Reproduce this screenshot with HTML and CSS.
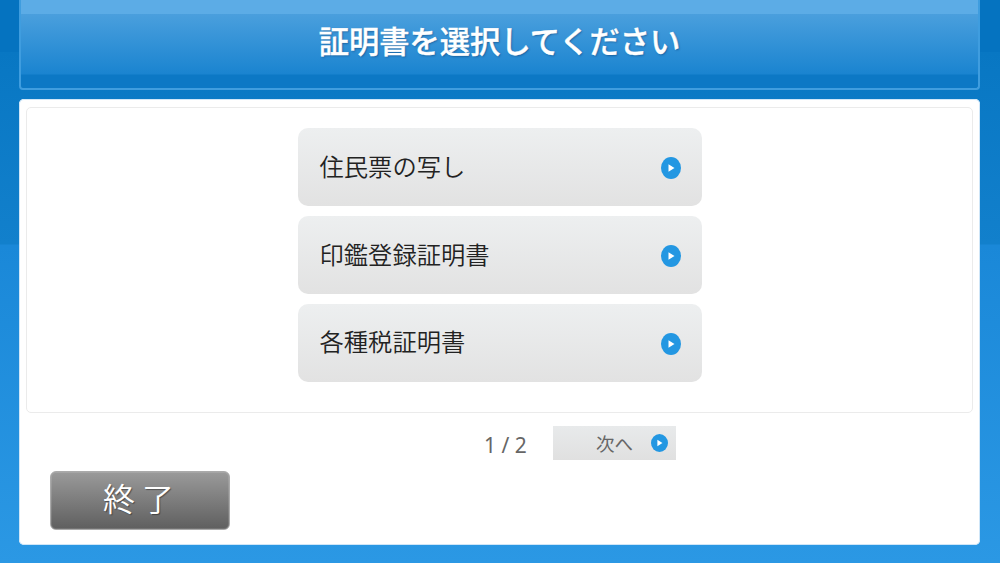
FILE: index.html
```html
<!DOCTYPE html>
<html lang="ja">
<head>
<meta charset="utf-8">
<title>証明書を選択してください</title>
<link rel="stylesheet" href="styles.css">
</head>
<body>
<div class="screen">
  <header class="header">
    <div class="header-shine"></div>
    <h1 class="title">証明書を選択してください</h1>
  </header>
  <main class="panel">
    <section class="list">
      <button class="item"><span class="item-text">住民票の写し</span><svg class="arrow" viewBox="0 0 20 20" preserveAspectRatio="none"><circle cx="10" cy="10" r="10" fill="#2397e2"/><path d="M7.5 6.5 13.5 10 7.5 13.5Z" fill="#fff"/></svg></button>
      <button class="item"><span class="item-text">印鑑登録証明書</span><svg class="arrow" viewBox="0 0 20 20" preserveAspectRatio="none"><circle cx="10" cy="10" r="10" fill="#2397e2"/><path d="M7.5 6.5 13.5 10 7.5 13.5Z" fill="#fff"/></svg></button>
      <button class="item"><span class="item-text">各種税証明書</span><svg class="arrow" viewBox="0 0 20 20" preserveAspectRatio="none"><circle cx="10" cy="10" r="10" fill="#2397e2"/><path d="M7.5 6.5 13.5 10 7.5 13.5Z" fill="#fff"/></svg></button>
    </section>
    <div class="pager">
      <span class="page-num">1 / 2</span>
      <button class="next"><span>次へ</span><svg class="arrow-small" viewBox="0 0 20 20" preserveAspectRatio="none"><circle cx="10" cy="10" r="10" fill="#2397e2"/><path d="M7.5 6.5 13.5 10 7.5 13.5Z" fill="#fff"/></svg></button>
    </div>
    <button class="exit">終 了</button>
  </main>
</div>
</body>
</html>
```
FILE: styles.css
```css
html, body {
  margin: 0;
  height: 100%;
}
body {
  width: 1000px;
  height: 563px;
  overflow: hidden;
  font-family: "Noto Sans CJK JP", "Noto Sans", sans-serif;
  background: linear-gradient(180deg, #0573c0 0, #0573c0 52px, #0877c3 52px, #1280cc 244px, #1a88d8 245px, #2b98e4 563px);
}
.screen {
  display: flex;
  flex-direction: column;
  height: 563px;
  padding: 0 20px 18px 19px;
  box-sizing: border-box;
}
.header {
  position: relative;
  height: 90px;
  box-sizing: border-box;
  border: 2px solid #3f9ddf;
  border-top: 0;
  border-radius: 0 0 4px 4px;
  background: linear-gradient(180deg, #4a9fdd 14px, #1a84d0 74px, #0c78c5 75px, #0c78c5 100%);
  display: flex;
  align-items: center;
  justify-content: center;
}
.header-shine {
  position: absolute;
  left: 0;
  right: 0;
  top: 0;
  height: 14px;
  background: #5cace6;
}
.title {
  position: relative;
  margin: 0 0 8px;
  font-size: 30.3px;
  font-weight: 500;
  line-height: 40px;
  color: #fff;
  -webkit-text-stroke: .4px #fff;
  text-shadow: 1px 1px 2px rgba(0, 40, 90, .45);
}
.panel {
  margin-top: 9px;
  flex: 1;
  display: flex;
  flex-direction: column;
  background: #fff;
  border-radius: 5px;
  padding: 8px 7px 15px;
  box-shadow: inset 0 0 0 1px #cfe6f8;
}
.list {
  height: 306px;
  box-sizing: border-box;
  border: 1px solid #ebebeb;
  border-radius: 5px;
  padding: 20px 0 0;
  display: flex;
  flex-direction: column;
  align-items: center;
  gap: 10px;
}
.item {
  width: 404px;
  height: 78px;
  flex: none;
  border: 0;
  border-radius: 10px;
  padding: 0 21px 0 22px;
  background: linear-gradient(180deg, #edeff0, #e2e2e2);
  display: flex;
  align-items: center;
  justify-content: space-between;
  font-family: inherit;
}
.item-text {
  font-size: 24.3px;
  font-weight: 350;
  line-height: 34px;
  color: #222;
  margin-bottom: 3px;
}
.item:nth-child(3) .item-text {
  margin-bottom: 5px;
}
.arrow {
  width: 20px;
  height: 22px;
  margin-top: 1px;
}
.pager {
  margin-top: 12px;
  height: 35px;
  display: flex;
  align-items: center;
  padding-left: 458px;
}
.page-num {
  font-family: "Noto Sans", sans-serif;
  font-size: 21px;
  color: #666;
  width: 69px;
  margin-top: 5px;
}
.next {
  width: 123px;
  height: 34px;
  border: 0;
  padding: 0 8px 0 43px;
  background: linear-gradient(180deg, #e8eaeb, #e0e0e0);
  display: flex;
  align-items: center;
  justify-content: space-between;
  font-family: inherit;
  font-size: 18.5px;
  color: #666;
}
.arrow-small {
  width: 17px;
  height: 18px;
}
.exit {
  margin: 11px 0 0 24px;
  width: 180px;
  height: 59px;
  border: 1px solid #aaa;
  border-radius: 6px;
  background: linear-gradient(180deg, #9a9a9a, #5f5f5f);
  box-shadow: inset 0 0 0 1px rgba(255, 255, 255, .12);
  font-family: inherit;
  font-size: 32px;
  font-weight: 350;
  line-height: 1;
  color: #fff;
  padding: 0 3px 8px 0;
  text-shadow: 1px 1px 1px rgba(0, 0, 0, .4);
}
```
